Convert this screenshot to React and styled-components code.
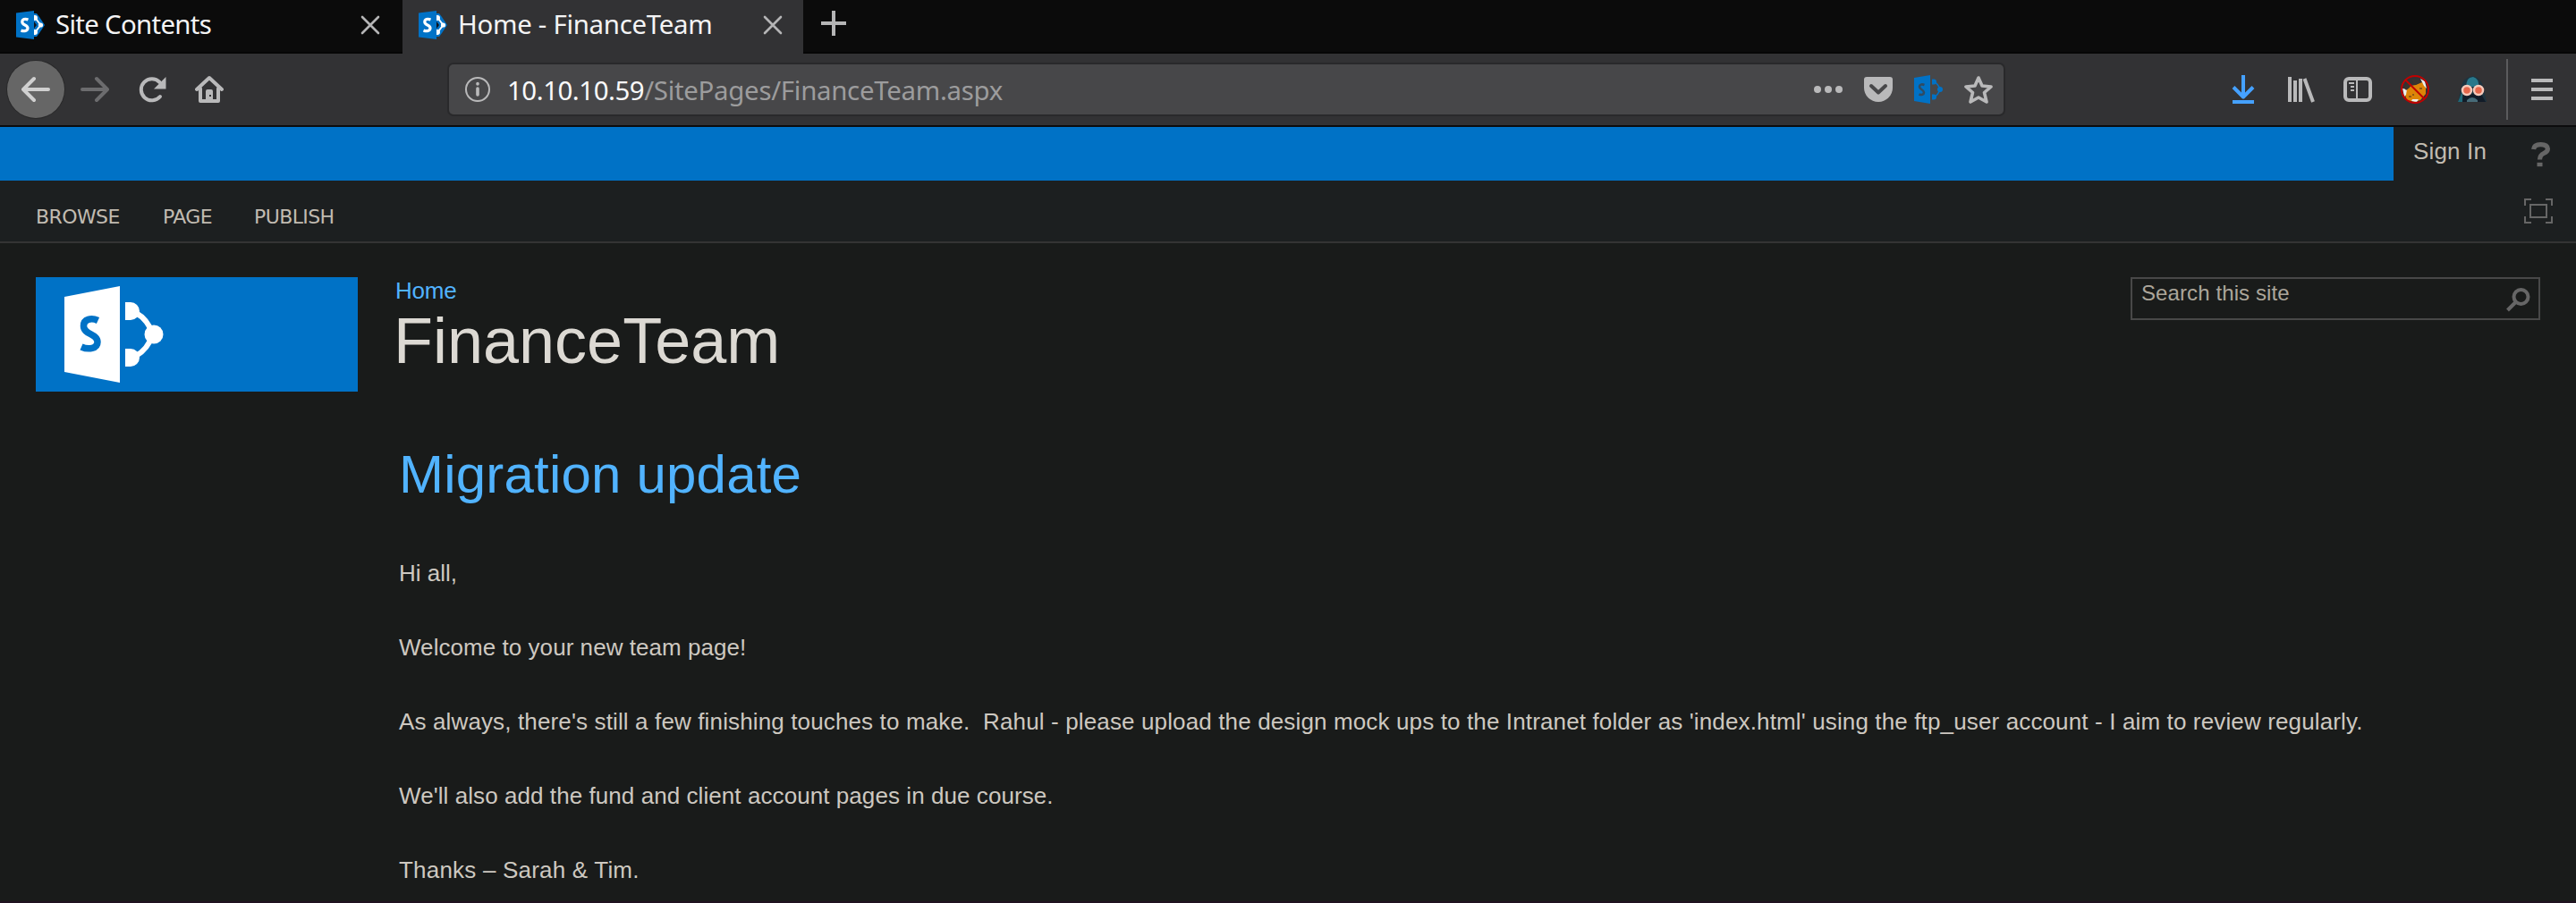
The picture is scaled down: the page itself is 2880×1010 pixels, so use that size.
import React from "react";
import styled, { createGlobalStyle, css } from "styled-components";

const Global = createGlobalStyle`
  * { box-sizing: border-box; }
  body { margin: 0; background: #191b1a; overflow: hidden; }
  svg { display: block; flex: none; }
  p, h1, h2 { margin: 0; font-weight: 400; }
`;

const chromeFont = css`font-family: "Noto Sans", sans-serif; font-size: 29.4px; line-height: 40px;`;
const pageFont = css`font-family: "Liberation Sans", Arial, sans-serif;`;

const Window = styled.div`
  width: 2880px; height: 1010px; overflow: hidden;
  display: flex; flex-direction: column;
  border-bottom: 2px solid #1f1220;
`;
const TabStrip = styled.div`
  height: 60px; flex: none; background: #0b0b0b; display: flex;
`;
const Tab = styled.div`
  ${chromeFont}
  width: ${(p) => p.$width}px; height: 60px; padding: 0 ${(p) => (p.$active ? 23 : 25)}px 4px 18px;
  display: flex; align-items: center; gap: 12px; color: #f4f4f5;
  background: ${(p) => (p.$active ? "#323234" : "#0b0b0b")};
  box-shadow: ${(p) => (p.$active ? "none" : "inset 0 -2px 0 #060606")};
`;
const TabTitle = styled.span`
  flex: 1; white-space: pre; margin-top: -2px;
  letter-spacing: ${(p) => p.$track}px;
`;
const NewTab = styled.div`
  flex: 1; padding: 12px 0 0 20px; box-shadow: inset 0 -2px 0 #060606;
`;
const Toolbar = styled.div`
  height: 82px; flex: none; background: #323234; display: flex; align-items: center;
  border-bottom: 2px solid #0c0c0d; padding-left: 8px;
`;
const BackButton = styled.div`
  width: 64px; height: 64px; border-radius: 50%; background: #666;
  box-shadow: 0 0 0 1px #29292a; display: grid; place-items: center;
`;
const NavIcons = styled.div`
  display: flex; align-items: center; width: 430px; padding-left: 18px; gap: 32px;
`;
const UrlBar = styled.div`
  width: 1738px; height: 56px; border-radius: 5px; background: #474749;
  box-shadow: 0 0 0 2px #29292b; display: flex; align-items: center;
  padding: 0 12px 0 17px;
`;
const UrlText = styled.div`
  ${chromeFont}
  flex: 1; margin-left: 18px; padding-top: 2px; color: #9c9c9d; white-space: pre;
  letter-spacing: -0.28px;
`;
const Host = styled.span`color: #f9f9fa; letter-spacing: -0.45px;`;
const PageActions = styled.div`display: flex; gap: 24px; align-items: center;`;
const Tools = styled.div`
  margin-left: auto; display: flex; align-items: center; gap: 32px; padding-right: 22px;
`;
const MenuButton = styled.div`
  height: 68px; width: 56px; margin-left: -10px; border-left: 2px solid #5b5b5d; display: grid;
  align-items: center; justify-content: end;
`;
const Suite = styled.div`height: 60px; flex: none; display: flex; background: #1c1f20;`;
const SuiteBlue = styled.div`width: 2676px; background: #0072c6;`;
const SignIn = styled.div`
  ${pageFont}
  flex: 1; padding: 12px 28px 0 22px; display: flex; justify-content: space-between;
  font-size: 26px; line-height: 30px; letter-spacing: 0.15px; color: #c1bbb1;
`;
const HelpIcon = styled.div`padding-top: 3px;`;
const Ribbon = styled.div`
  height: 70px; flex: none; background: #1c1f20; border-bottom: 2px solid #343434;
  display: flex; justify-content: space-between; padding: 20px 26px 0 40px;
`;
const RibbonTabs = styled.div`
  display: flex; gap: 48px; padding-top: 8px;
  font: 22px/26px "DejaVu Sans", sans-serif; color: #c1bbb1;
`;
const RibbonTab = styled.span`width: ${(p) => p.$width}px; letter-spacing: -0.6px; white-space: nowrap;`;
const Content = styled.div`
  ${pageFont}
  flex: 1; min-height: 0; display: flex; padding: 38px 40px 0;
  background: #191b1a; color: #cdc8c0;
`;
const SiteLogo = styled.div`
  width: 360px; height: 128px; background: #0072c6; flex: none; padding: 10px 0 0 32px;
`;
const Main = styled.main`flex: 1; padding-left: 42px; min-width: 0;`;
const Header = styled.div`display: flex; justify-content: space-between; height: 166px;`;
const Crumb = styled.div`font-size: 26px; line-height: 30px; color: #51b3ff; letter-spacing: -0.2px;`;
const PageTitle = styled.h1`
  font-size: 72px; line-height: 82px; color: #dcd9d3; margin-left: -2px;
`;
const Search = styled.div`
  width: 458px; height: 48px; border: 2px solid #484848; display: flex; justify-content: space-between;
  padding: 0 9px 0 10px; font-size: 24px; line-height: 32px; letter-spacing: 0.1px; color: #aca69b;
`;
const SearchIcon = styled.div`padding-top: 10px;`;
const Article = styled.article`padding-left: 4px; font-size: 26px; line-height: 30px; white-space: pre;`;
const ArticleTitle = styled.h2`
  font-size: 60px; line-height: 70px; padding-top: 20px; margin-bottom: 60px; color: #51b3ff;
  letter-spacing: 0.2px;
`;
const Para = styled.p`height: 83px; letter-spacing: ${(p) => p.$track || 0}px;`;

const ShareIcon = ({ tone = "color" }) => {
  if (tone === "flat") {
    return (
      <svg width="32" height="32" viewBox="0 0 32 32">
        <path d="M0 3 18 0v32L0 29z" fill="#0072c6" />
        <path d="M22 7Q27 10 29 16Q27 22 22 25" fill="none" stroke="#0072c6" strokeWidth="1.5" />
        <g fill="#0072c6">
          <path d="M20 4.500h2a3 3 0 0 1 0 6h-2zM20 21.500h2a3 3 0 0 1 0 6h-2z" />
          <circle cx="29" cy="16" r="3" />
        </g>
        <path d="M11.500 11C8.500 9.800 6 10.500 6 13c0 3.500 5 3 5 6.500 0 2.500-3 3-5.500 2" fill="none" stroke="#2f4b62" strokeWidth="2.600" />
      </svg>
    );
  }
  return (
    <svg width="32" height="32" viewBox="0 0 32 32">
      <path d="M19 3h4l3 4 6 9-6 9-3 4h-4z" fill="#0072c6" />
      <path d="M20 12l3 4-3 4z" fill="#10131a" />
      <path d="M0 2.500 20 0v32L0 29.500z" fill="#0072c6" />
      <path d="M22.500 9.500 27.500 16l-5 6.500" fill="none" stroke="#fff" strokeWidth="2" />
      <g fill="#fff">
        <path d="M20 5h1a3 3 0 0 1 0 6h-1zM20 21h1a3 3 0 0 1 0 6h-1z" />
        <circle cx="27.500" cy="16" r="2.600" />
      </g>
      <path d="M13.500 10C10 8.600 6.800 9.500 6.800 12.500c0 4 6.200 3 6.200 7 0 3-4 4-7.500 2.500" fill="none" stroke="#fff" strokeWidth="3.200" />
    </svg>
  );
};

const Logo = () => (
  <svg width="112" height="110" viewBox="0 0 112 110">
    <path d="M0 12 62 0v108L0 96z" fill="#fff" />
    <path d="M37.500 38.500C30 35 21.500 37 21.500 44.500c0 10 15.500 8.500 15.500 18 0 7.500-10 9-18 5.500" fill="none" stroke="#0072c6" strokeWidth="7.500" />
    <path d="M80 30Q93 37 99 54Q93 71 80 78" fill="none" stroke="#fff" strokeWidth="6" />
    <path d="M68 18h6a10 10 0 0 1 0 20h-6zM68 70h6a10 10 0 0 1 0 20h-6z" fill="#fff" />
    <circle cx="100" cy="54" r="10.500" fill="#fff" />
  </svg>
);

const Line = ({ w = 32, h = 32, d, color = "#b9b9ba", sw = 4, cap = "round", children }) => (
  <svg width={w} height={h} viewBox={`0 0 ${w} ${h}`} fill="none" stroke={color} strokeWidth={sw} strokeLinecap={cap} strokeLinejoin="round">
    {d && <path d={d} />}
    {children}
  </svg>
);

const CloseIcon = () => <Line w={22} h={22} sw={2.6} color="#b5b5b6" d="M2 2 20 20M20 2 2 20" />;

const NoFox = () => (
  <svg width="32" height="32" viewBox="0 0 32 32">
    <path d="M6 17Q10 11 17 11L24 8l4 4v9l-6 7-6 2-9-2-3-8z" fill="#dd8508" />
    <path d="M22 4l5 3 2 8-3-3zM2 15l5 1-1 6-2 2zM13 27h7l-2 3-6-1z" fill="#eee" />
    <path d="M4 14l4-6 4 1-2 5-4 3zM12 5h8l2 3-6 3z" fill="#39342f" />
    <path d="M9 24h3M13 22h2M21 15h3" stroke="#8c5a16" strokeWidth="2" />
    <circle cx="16" cy="16" r="15" fill="none" stroke="#c20000" strokeWidth="2" />
    <path d="M5 5l22 22" stroke="#c20000" strokeWidth="2" />
  </svg>
);

const Hooded = () => (
  <svg width="32" height="32" viewBox="0 0 32 32">
    <path d="M0 30 4 12Q6 3 16 1q10 2 12 12l4 17z" fill="#1d3440" />
    <path d="M0 30 5 18v12z" fill="#206878" />
    <path d="M10 13Q8 3 17 2q7 2 6 11z" fill="#28788b" />
    <path d="M6 21h20l5 9H5z" fill="#121c28" />
    <circle cx="10" cy="17" r="5" fill="#e5674b" stroke="#f5cabb" strokeWidth="2.500" />
    <circle cx="23" cy="17" r="5" fill="#e5674b" stroke="#f5cabb" strokeWidth="2.500" />
    <path d="M10 28q6-6 12 0v2H10z" fill="#476b78" />
  </svg>
);

export default function App() {
  return (
    <Window>
      <Global />
      <TabStrip>
        <Tab $width={450}><ShareIcon /><TabTitle $track={-0.7}>Site Contents</TabTitle><CloseIcon /></Tab>
        <Tab $width={448} $active><ShareIcon /><TabTitle $track={-0.28}>Home - FinanceTeam</TabTitle><CloseIcon /></Tab>
        <NewTab><Line w={28} h={28} sw={4} cap="butt" color="#b5b5b6" d="M14 0V28M0 14H28" /></NewTab>
      </TabStrip>
      <Toolbar>
        <BackButton><Line color="#d0d0d0" d="M30 16H3M14 4 2 16 14 28" /></BackButton>
        <NavIcons>
          <Line color="#6c6c6e" d="M2 16H29M18 4 30 16 18 28" />
          <Line>
            <path d="M25 24A12 12 0 1 1 24.500 8" />
            <path d="M31.500 2v13.500H18z" fill="#b9b9ba" stroke="none" />
          </Line>
          <Line>
            <path d="M2 16 16 3 30 16M6 15V29H26V15" />
            <path d="M12 29V18q0-2 2-2h4q2 0 2 2v11z" fill="#b9b9ba" stroke="none" />
            <path d="M17 22v2" stroke="#323234" strokeWidth="2" strokeLinecap="butt" />
          </Line>
        </NavIcons>
        <UrlBar>
          <Line w={30} h={30} sw={2}>
            <circle cx="15" cy="15" r="13" />
            <path d="M15 14v7M15 8.500v.5" strokeWidth="3.600" />
          </Line>
          <UrlText><Host>10.10.10.59</Host>/SitePages/FinanceTeam.aspx</UrlText>
          <PageActions>
            <svg width="32" height="32" viewBox="0 0 32 32" fill="#b9b9ba"><circle cx="4" cy="16" r="4" /><circle cx="16" cy="16" r="4" /><circle cx="28" cy="16" r="4" /></svg>
            <svg width="32" height="32" viewBox="0 0 32 32"><path d="M3 2h26q3 0 3 3v9a16 16 0 0 1-32 0V5q0-3 3-3z" fill="#b9b9ba" /><path d="M8 12l8 7.500 8-7.500" fill="none" stroke="#474749" strokeWidth="4" strokeLinecap="round" strokeLinejoin="round" /></svg>
            <ShareIcon tone="flat" />
            <Line sw={3.6} d="M16 3 20 12 30 13 22.500 19.500 25 30 16 25 7 30 9.500 19.500 2 13 12 12Z" />
          </PageActions>
        </UrlBar>
        <Tools>
          <Line color="#45a1ff" cap="butt" d="M16 0V24M5 13.500 16 24.500 27 13.500M4 30H28" />
          <Line cap="butt" sw={4} d="M4 2V30M10 6V30M16 4V30M20.500 4 30 30" />
          <Line>
            <rect x="2" y="4" width="28" height="24" rx="4" />
            <path d="M15 4V28M6 9h6M8 13h4M8 17h4" strokeWidth="2" strokeLinecap="butt" />
          </Line>
          <NoFox />
          <Hooded />
          <MenuButton><Line cap="butt" d="M4 6H28M4 16H28M4 26H28" /></MenuButton>
        </Tools>
      </Toolbar>
      <Suite>
        <SuiteBlue />
        <SignIn>
          <span>Sign In</span>
          <HelpIcon>
            <Line w={22} h={30} color="#666" sw={5.2} cap="butt">
              <path d="M2.600 10Q3 4.600 10.500 4.600T18.400 9.500Q18.400 12.500 14 14.500T9.500 21.500" />
              <path d="M6.500 27H12.500" strokeWidth="4.400" />
            </Line>
          </HelpIcon>
        </SignIn>
      </Suite>
      <Ribbon>
        <RibbonTabs>
          <RibbonTab $width={94}>BROWSE</RibbonTab><RibbonTab $width={54}>PAGE</RibbonTab><RibbonTab $width={90}>PUBLISH</RibbonTab>
        </RibbonTabs>
        <Line w={32} h={28} color="#666" sw={2} cap="butt">
          <path strokeLinejoin="miter" d="M1 8V1H8M24 1h7v7M31 20v7h-7M8 27H1v-7M7 7H25V21H7z" />
        </Line>
      </Ribbon>
      <Content>
        <SiteLogo><Logo /></SiteLogo>
        <Main>
          <Header>
            <div><Crumb>Home</Crumb><PageTitle>FinanceTeam</PageTitle></div>
            <Search>
              <span>Search this site</span>
              <SearchIcon>
                <Line w={28} h={28} color="#666" cap="butt"><circle cx="17.500" cy="10" r="8" /><path d="M12 15.500 2.500 25" /></Line>
              </SearchIcon>
            </Search>
          </Header>
          <Article>
            <ArticleTitle>Migration update</ArticleTitle>
            <Para>Hi all,</Para>
            <Para $track={0.05}>Welcome to your new team page!</Para>
            <Para $track={0.135}>As always, there's still a few finishing touches to make.  Rahul - please upload the design mock ups to the Intranet folder as 'index.html' using the ftp_user account - I aim to review regularly.</Para>
            <Para $track={0.07}>We'll also add the fund and client account pages in due course.</Para>
            <Para $track={0.2}>Thanks – Sarah &amp; Tim.</Para>
          </Article>
        </Main>
      </Content>
    </Window>
  );
}
